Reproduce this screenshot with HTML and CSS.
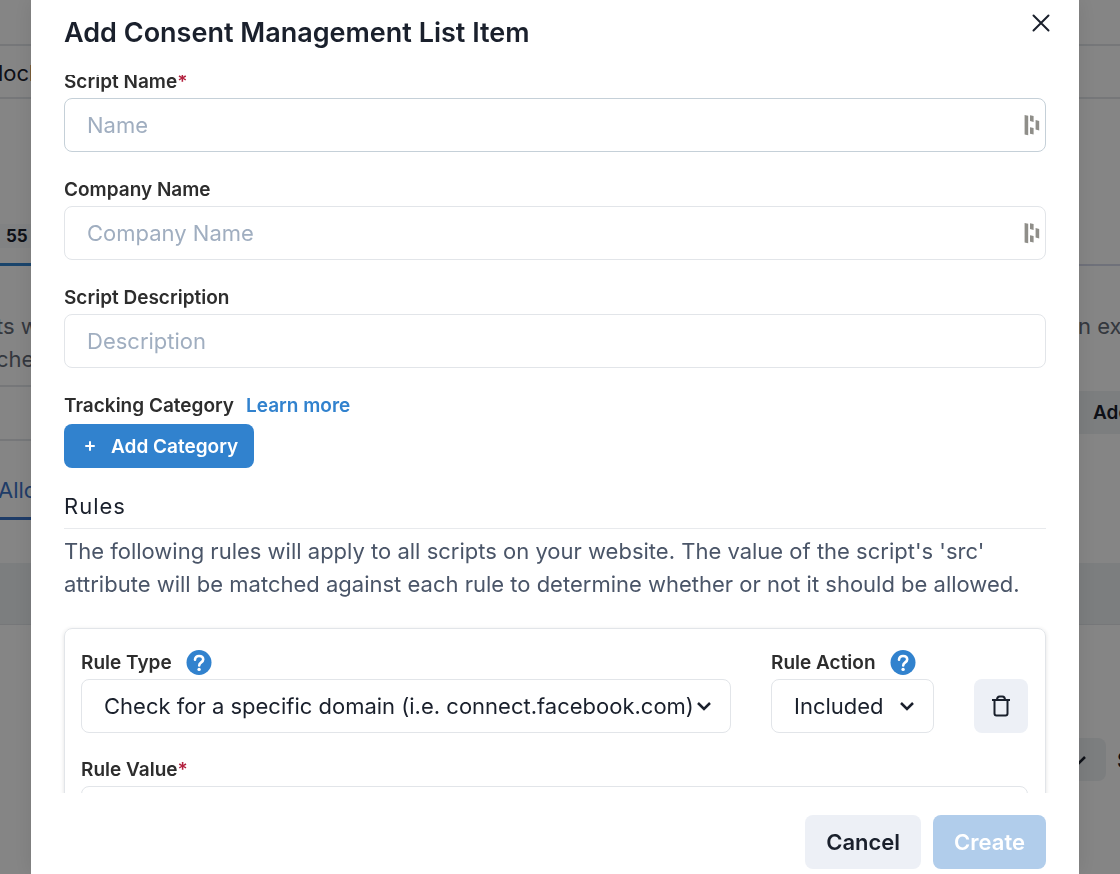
FILE: index.html
```html
<!DOCTYPE html>
<html lang="en">
<head>
    <meta charset="UTF-8">
    <meta name="viewport" content="width=device-width, initial-scale=1.0">
    <title>Add Consent Management List Item</title>
    <link rel="stylesheet" href="styles.css">
</head>
<body>
    <div class="page">
        <div class="row row-top"></div>
        <div class="row row-crumbs"><span class="edge-left">lock</span></div>
        <div class="row row-tabs">
            <div class="edge-left tab-active"><span class="count">55</span></div>
        </div>
        <div class="row row-intro">
            <div class="edge-left intro intro-left">ts w<br>che</div>
            <div class="edge-right intro">n ex</div>
        </div>
        <div class="row row-actions">
            <div class="edge-left divider"></div>
            <div class="edge-right"><div class="page-button">Add</div></div>
        </div>
        <div class="row row-subtabs">
            <div class="edge-left subtab">Allow</div>
        </div>
        <div class="row row-band"></div>
        <div class="row row-filter">
            <div class="edge-right filter">
                <div class="filter-button">
                    <svg width="18" height="18" viewBox="0 0 18 18" fill="none" stroke="currentColor" stroke-width="2.500"><path d="M3 6l6 6 6-6"/></svg>
                </div>
                <span>S</span>
            </div>
        </div>
    </div>

    <div class="overlay">
        <section class="modal" role="dialog" aria-labelledby="modalTitle">
            <header class="modal-header">
                <h1 id="modalTitle">Add Consent Management List Item</h1>
                <button type="button" class="close" aria-label="Close">
                    <svg width="18" height="18" viewBox="0 0 18 18" fill="none" stroke="currentColor" stroke-width="2" stroke-linecap="round"><path d="M1.500 1.500l15 15M16.500 1.500l-15 15"/></svg>
                </button>
            </header>

            <div class="modal-body">
                <form class="form" id="itemForm">
                    <div class="field">
                        <label for="scriptName">Script Name<span class="required">*</span></label>
                        <div class="control">
                            <input type="text" id="scriptName" class="input active" placeholder="Name">
                            <svg class="manager-icon" width="16" height="22" viewBox="0 0 16 22" fill="currentColor"><path d="M.6 1l3.600.8v19.400l-3.600-.8zM6 1.200l3.600.8v6l-3.600-.9zM6 13.200l3.600.9v6.500l-3.600-.8zM11.600 6l3.600.9v9.600l-3.600-.9z"/></svg>
                        </div>
                    </div>
                    <div class="field">
                        <label for="companyName">Company Name</label>
                        <div class="control">
                            <input type="text" id="companyName" class="input" placeholder="Company Name">
                            <svg class="manager-icon" width="16" height="22" viewBox="0 0 16 22" fill="currentColor"><path d="M.6 1l3.600.8v19.400l-3.600-.8zM6 1.200l3.600.8v6l-3.600-.9zM6 13.200l3.600.9v6.500l-3.600-.8zM11.600 6l3.600.9v9.600l-3.600-.9z"/></svg>
                        </div>
                    </div>
                    <div class="field">
                        <label for="scriptDescription">Script Description</label>
                        <input type="text" id="scriptDescription" class="input" placeholder="Description">
                    </div>
                    <div class="category">
                        <div class="label-row">
                            <span class="label">Tracking Category</span>
                            <a href="#" class="learn-more">Learn more</a>
                        </div>
                        <button type="button" class="button add-category">
                            <svg width="12" height="12" viewBox="0 0 12 12" fill="none" stroke="currentColor" stroke-width="2" stroke-linecap="round"><path d="M6 2v8M2 6h8"/></svg>
                            Add Category
                        </button>
                    </div>

                    <h2 class="rules-title">Rules</h2>
                    <p class="rules-text">The following rules will apply to all scripts on your website. The value of the script's 'src' attribute will be matched against each rule to determine whether or not it should be allowed.</p>

                    <div class="rule-card">
                        <div class="rule-grid">
                            <div class="rule-field">
                                <div class="label-row help-row">
                                    <label for="ruleType">Rule Type</label>
                                    <svg class="help" width="26" height="26" viewBox="0 0 26 26" fill="none"><circle cx="13" cy="12.500" r="12.500" fill="currentColor"/><path d="M9 9.800C9 7.400 10.700 6 13 6s4.200 1.300 4.200 3.500c0 2.900-4 2.900-4 5.900" stroke="#fff" stroke-width="2.600" stroke-linecap="round"/><circle cx="13.100" cy="19.400" r="1.700" fill="#fff"/></svg>
                                </div>
                                <div class="control">
                                    <select id="ruleType" class="input select">
                                        <option>Check for a specific domain (i.e. connect.facebook.com)</option>
                                    </select>
                                    <svg class="chevron" width="18" height="18" viewBox="0 0 18 18" fill="none" stroke="currentColor" stroke-width="2.500"><path d="M3 6l6 6 6-6"/></svg>
                                </div>
                            </div>
                            <div class="rule-field">
                                <div class="label-row help-row">
                                    <label for="ruleAction">Rule Action</label>
                                    <svg class="help" width="26" height="26" viewBox="0 0 26 26" fill="none"><circle cx="13" cy="12.500" r="12.500" fill="currentColor"/><path d="M9 9.800C9 7.400 10.700 6 13 6s4.200 1.300 4.200 3.500c0 2.900-4 2.900-4 5.900" stroke="#fff" stroke-width="2.600" stroke-linecap="round"/><circle cx="13.100" cy="19.400" r="1.700" fill="#fff"/></svg>
                                </div>
                                <div class="control">
                                    <select id="ruleAction" class="input select">
                                        <option>Included</option>
                                    </select>
                                    <svg class="chevron" width="18" height="18" viewBox="0 0 18 18" fill="none" stroke="currentColor" stroke-width="2.500"><path d="M3 6l6 6 6-6"/></svg>
                                </div>
                            </div>
                            <button type="button" class="delete" aria-label="Delete rule">
                                <svg width="20" height="22" viewBox="0 0 20 22" fill="none" stroke="currentColor" stroke-width="2"><path d="M1 5h18M3.500 5v13.500a2 2 0 0 0 2 2h9a2 2 0 0 0 2-2V5M6 5c0-2.400.9-3.600 2.600-3.600h2.800C13.100 1.400 14 2.600 14 5"/></svg>
                            </button>
                        </div>
                        <div class="field">
                            <label for="ruleValue">Rule Value<span class="required">*</span></label>
                            <input type="text" id="ruleValue" class="input">
                        </div>
                    </div>
                </form>
            </div>

            <footer class="modal-footer">
                <button type="button" class="button cancel">Cancel</button>
                <button type="submit" form="itemForm" class="button create" disabled>Create</button>
            </footer>
        </section>
    </div>
</body>
</html>
```

FILE: styles.css
```css
* {
    box-sizing: border-box;
}
body {
    margin: 0;
    height: 100vh;
    overflow: hidden;
    font-family: Inter, "Liberation Sans", sans-serif;
    font-size: 22px;
    color: #1a202c;
    background: #fff;
}
h1, h2, p {
    margin: 0;
}
button, input, select {
    font-family: inherit;
    margin: 0;
}
svg {
    display: block;
    flex: none;
}

/* page behind the modal */
.page {
    height: 100vh;
    overflow: hidden;
}
.row {
    display: flex;
    justify-content: space-between;
    white-space: nowrap;
}
.edge-left {
    width: 31px;
    overflow: hidden;
}
.edge-right {
    width: 42px;
    margin-left: auto;
    overflow: hidden;
}
.row-top {
    height: 46px;
    border-bottom: 2px solid #e2e5e9;
}
.row-crumbs {
    height: 53px;
    line-height: 54px;
    text-indent: -2px;
    border-bottom: 2px solid #e2e5e9;
}
.row-tabs {
    height: 167px;
    border-bottom: 2px solid #d5d8ea;
}
.tab-active {
    height: 167px;
    padding-top: 125px;
    border-bottom: 3px solid #3182ce;
}
.count {
    display: block;
    height: 24px;
    line-height: 24px;
    padding-left: 6px;
    font-size: 17px;
    font-weight: 700;
    background: #f7fafc;
}
.row-intro {
    height: 121px;
}
.intro {
    padding-top: 44px;
    line-height: 33px;
    color: #646b78;
}
.intro-left {
    margin-left: -4px;
    width: 35px;
    border-bottom: 2px solid #e2e5e9;
}
.row-actions {
    height: 54px;
}
.divider {
    border-bottom: 2px solid #e2e5e9;
}
.page-button {
    height: 43px;
    margin-top: 4px;
    padding-left: 15px;
    line-height: 43px;
    font-size: 19px;
    font-weight: 600;
    background: #eef1f4;
}
.row-subtabs {
    height: 122px;
}
.subtab {
    height: 79px;
    padding-top: 32px;
    line-height: 34px;
    text-indent: -2px;
    color: #3b73c8;
    border-bottom: 3px solid #3b73c8;
}
.row-band {
    height: 62px;
    background: #eef1f4;
    border-bottom: 1px solid #e2e5e9;
}
.row-filter {
    padding-top: 113px;
}
.filter {
    display: flex;
    align-items: center;
    gap: 11px;
    font-weight: 600;
}
.filter-button {
    display: flex;
    align-items: center;
    flex: none;
    width: 28px;
    height: 43px;
    padding-right: 18px;
    justify-content: flex-end;
    border-radius: 0 8px 8px 0;
    background: #eef1f4;
}

/* modal */
.overlay {
    position: fixed;
    inset: 0;
    padding: 0 41px 0 31px;
    background: rgba(0, 0, 0, 0.48);
}
.modal {
    display: flex;
    flex-direction: column;
    height: 100%;
    background: #fff;
    box-shadow: 0 0 20px rgba(0, 0, 0, 0.1);
}
.modal-header {
    display: flex;
    justify-content: space-between;
    align-items: flex-start;
    flex: none;
    padding: 15px 22px 24px 33px;
}
.modal-header h1 {
    font-size: 27px;
    line-height: 36px;
    font-weight: 600;
}
.close {
    display: flex;
    align-items: center;
    justify-content: center;
    width: 32px;
    height: 16px;
    padding: 0;
    border: 0;
    color: #1a202c;
    background: none;
}
.modal-body {
    flex: 1;
    min-height: 0;
    padding: 0 33px;
    overflow: hidden;
}
.form {
    margin-top: -9px;
}
.field {
    margin-bottom: 22px;
}
label, .label, .learn-more {
    display: block;
    font-size: 19px;
    line-height: 32px;
    font-weight: 600;
}
label, .label {
    color: #2d2d2d;
}
.required {
    color: #b3213f;
}
.control {
    position: relative;
}
.input {
    display: block;
    width: 100%;
    height: 54px;
    padding: 0 22px;
    font-size: 22px;
    color: #1a202c;
    background: #fff;
    border: 1px solid #e2e5e9;
    border-radius: 8px;
    outline: none;
}
.input::placeholder {
    color: #a0aec0;
    opacity: 1;
}
.active {
    border-color: #c5d0d8;
}
.manager-icon {
    position: absolute;
    right: 6px;
    top: 16px;
    color: #8f8e89;
}
.label-row {
    display: flex;
    align-items: center;
    gap: 12px;
    height: 32px;
}
.learn-more {
    color: #3182ce;
    text-decoration: none;
}
.button {
    display: flex;
    align-items: center;
    height: 54px;
    padding: 0 21px;
    font-size: 22px;
    font-weight: 600;
    border: 0;
    border-radius: 8px;
}
.add-category {
    gap: 15px;
    height: 44px;
    margin-top: 2px;
    padding: 0 16px 0 20px;
    font-size: 19px;
    color: #fff;
    background: #3182ce;
}
.rules-title {
    margin: 22px 0 6px;
    padding-bottom: 5px;
    font-size: 22px;
    line-height: 33px;
    font-weight: 400;
    letter-spacing: 1px;
    border-bottom: 1px solid #e8eaed;
}
.rules-text {
    line-height: 33px;
    color: #4a5568;
}
.rule-card {
    margin-top: 27px;
    padding: 18px 17px 18px 16px;
    border: 1px solid #e2e5e9;
    border-radius: 8px;
    box-shadow: 0 1px 4px rgba(0, 0, 0, 0.12);
}
.rule-grid {
    display: grid;
    grid-template-columns: 1fr 163px 54px;
    align-items: end;
    gap: 40px;
    margin-bottom: 21px;
}
.help-row {
    gap: 14px;
}
.help {
    color: #3182ce;
}
.select {
    padding-right: 38px;
    appearance: none;
}
.chevron {
    position: absolute;
    right: 18px;
    top: 18px;
    pointer-events: none;
}
.delete {
    display: flex;
    align-items: center;
    justify-content: center;
    height: 54px;
    padding: 0;
    color: #1a202c;
    background: #edf0f6;
    border: 0;
    border-radius: 8px;
}
.modal-footer {
    display: flex;
    justify-content: flex-end;
    flex: none;
    gap: 12px;
    padding: 22px 33px 5px;
}
.cancel {
    color: #1a202c;
    background: #edf0f6;
}
.create {
    color: #fff;
    background: #b1cdeb;
}
```
